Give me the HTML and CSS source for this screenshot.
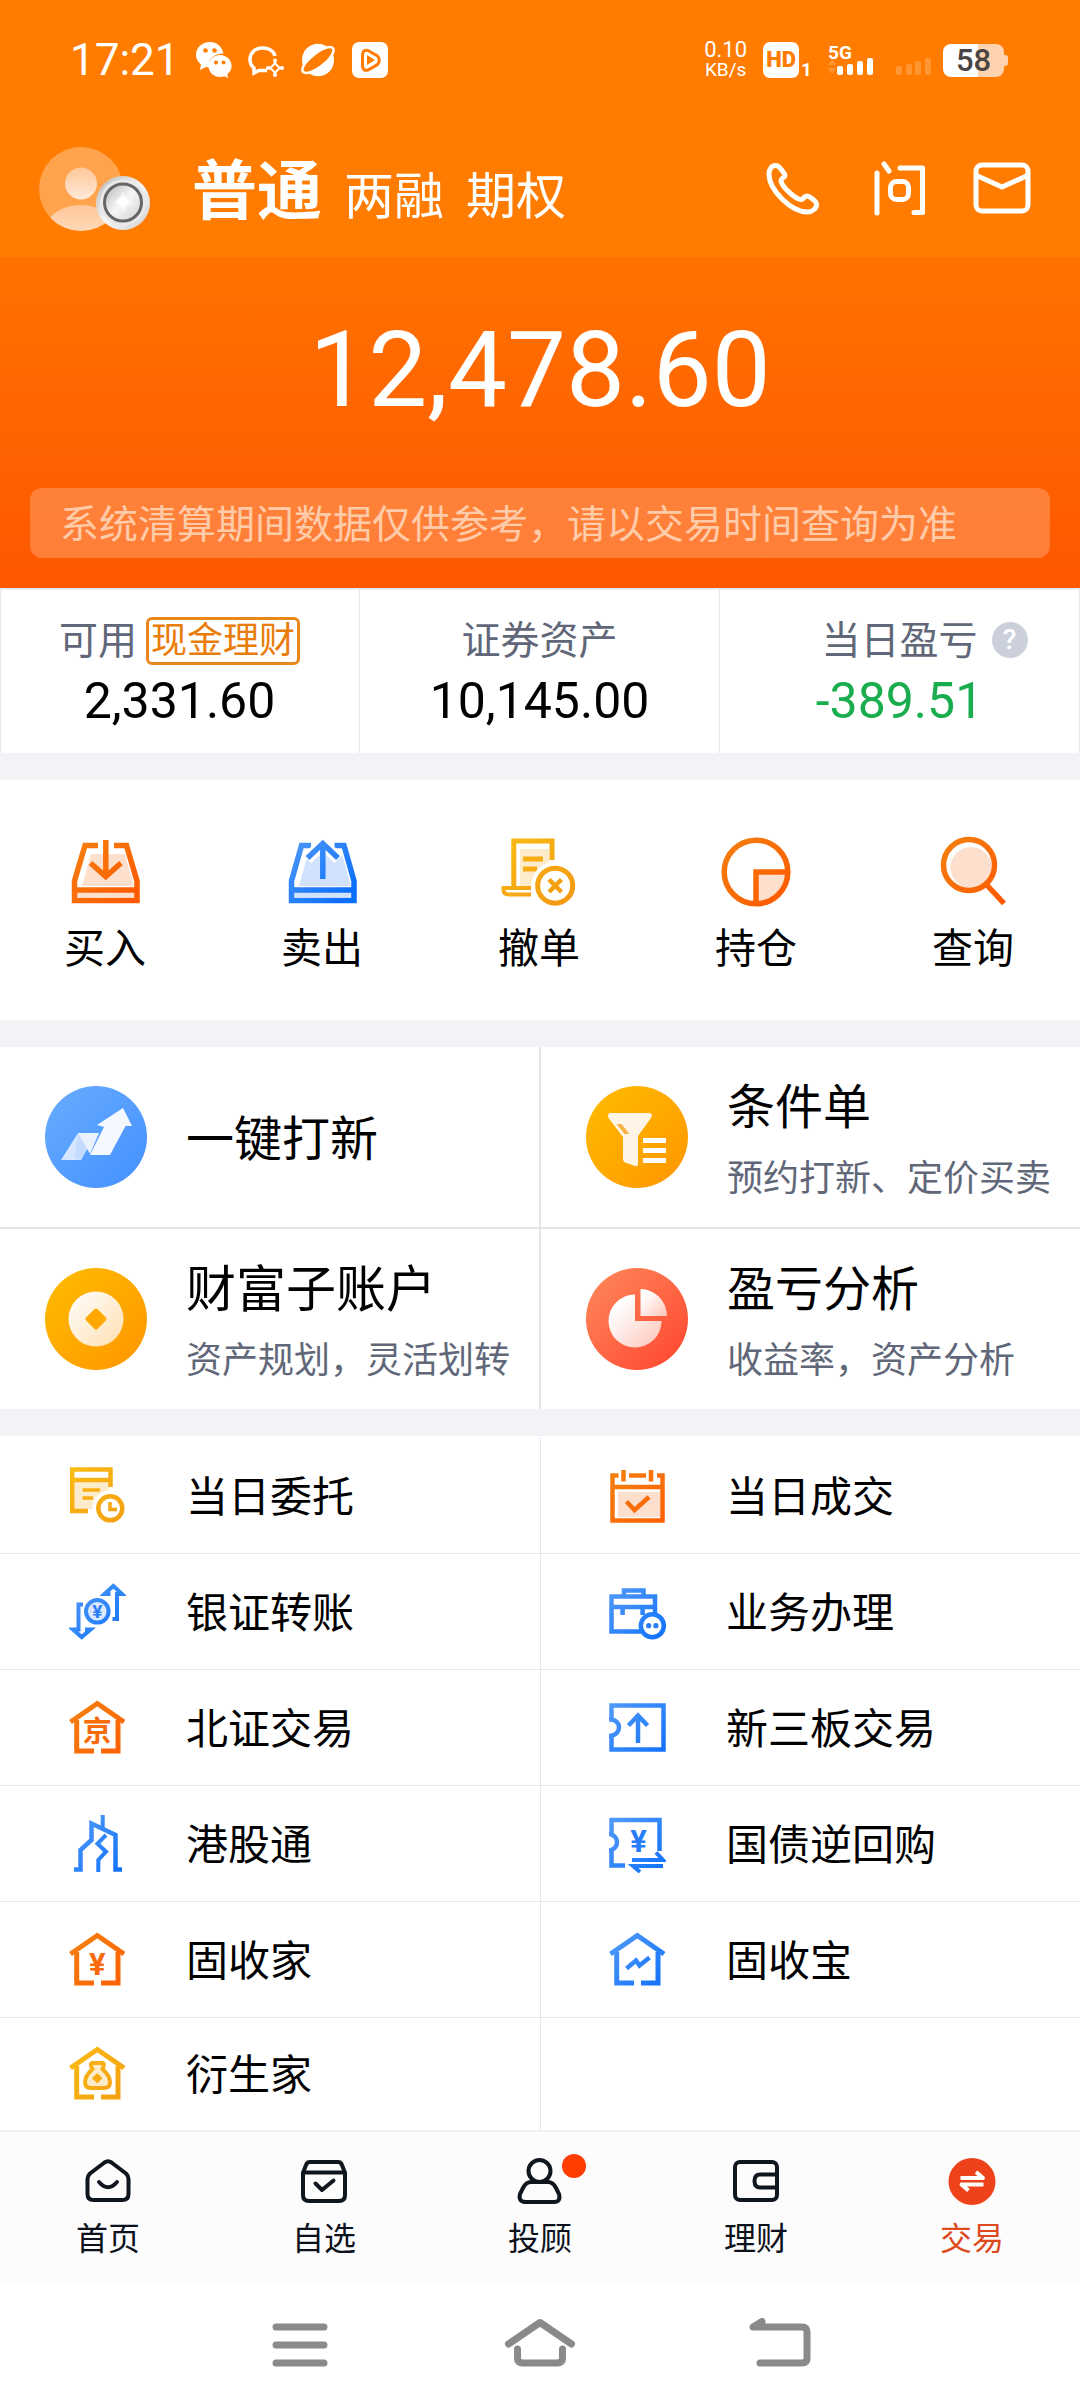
FILE: index.html
```html
<!DOCTYPE html>
<html lang="zh-CN">
<head>
<meta charset="utf-8">
<meta name="viewport" content="width=device-width, initial-scale=1">
<title>交易</title>
<link rel="stylesheet" href="styles.css">
</head>
<body>
<svg class="defs" aria-hidden="true">
  <defs>
    <linearGradient id="orange" gradientUnits="userSpaceOnUse" x1="0" y1="0" x2="64" y2="64"><stop offset="0" stop-color="#f4820f"/><stop offset="1" stop-color="#ff5a00"/></linearGradient>
    <linearGradient id="blue" gradientUnits="userSpaceOnUse" x1="0" y1="0" x2="60" y2="60"><stop offset="0" stop-color="#559cf8"/><stop offset="1" stop-color="#0a6efc"/></linearGradient>
    <linearGradient id="yellow" gradientUnits="userSpaceOnUse" x1="0" y1="0" x2="60" y2="60"><stop offset="0" stop-color="#fbbc14"/><stop offset="1" stop-color="#f39c12"/></linearGradient>
    <linearGradient id="disc-blue" x1="0" y1="0" x2="1" y2="1"><stop offset="0" stop-color="#69adff"/><stop offset="1" stop-color="#4390ff"/></linearGradient>
    <linearGradient id="disc-gold" x1="0" y1="0" x2="1" y2="1"><stop offset="0" stop-color="#ffbd00"/><stop offset="1" stop-color="#ff9500"/></linearGradient>
    <linearGradient id="disc-red" x1="0" y1="0" x2="1" y2="1"><stop offset="0" stop-color="#ff8a5c"/><stop offset="1" stop-color="#ff442e"/></linearGradient>
    <linearGradient id="cream" x1="0" y1="0" x2="1" y2="1"><stop offset="0" stop-color="#fff"/><stop offset="1" stop-color="#ffdfb0"/></linearGradient>
    <linearGradient id="blush" x1="0" y1="0" x2="1" y2="1"><stop offset=".2" stop-color="#fff"/><stop offset="1" stop-color="#ffc4b8"/></linearGradient>
    <linearGradient id="silver" x1="0" y1="0" x2="1" y2="1"><stop offset="0" stop-color="#b5b5b5"/><stop offset=".5" stop-color="#f6f6f6"/><stop offset="1" stop-color="#d0d0d0"/></linearGradient>
    <linearGradient id="person" x1="0" y1="0" x2="0" y2="1"><stop offset="0" stop-color="#ffc799"/><stop offset="1" stop-color="#ffe9d8"/></linearGradient>
    <clipPath id="avatar-clip"><circle cx="42" cy="42" r="42"/></clipPath>
    <g id="house" fill="none" stroke-width="5"><path d="M1.500 23L28.300 4.500L55 23"/><path d="M7.700 21V52H25M32 52H49V21"/></g>
  </defs>
</svg>

<header class="top">
  <div class="status">
    <time class="clock">17:21</time>
    <div class="notices">
      <svg width="36" height="36" viewBox="0 0 36 36"><path fill="#fff" d="M14 0C6 0 0 5.500 0 13c0 4 2 7 5 9.500L4 28l6-3c1 .4 2 .4 3 .4C12 17 18 11.500 27.500 11.500C26 4.500 21 0 14 0z"/><path fill="#fff" d="M24 13c-6.500 0-11.500 5-11.500 11S17.500 35 24 35c1.600 0 3-.3 4.400-.8L32 36l-.6-4c2.600-2 4.200-4.800 4.200-8C35.600 18 30.500 13 24 13z"/><g fill="#ff7c00"><circle cx="9.500" cy="8.500" r="2.300"/><circle cx="18.500" cy="8.500" r="2.300"/><circle cx="20" cy="20.500" r="2"/><circle cx="27.500" cy="20.500" r="2"/></g></svg>
      <svg width="36" height="36" viewBox="0 0 36 36" fill="none" stroke="#fff" stroke-width="3.500"><path d="M27 14C26 9 21 6 14.500 6C7 6 2 11 2 17.500c0 4 1.500 6.500 4 8.500v5l5-2.500h8"/><path stroke-width="2" d="M27 20q1.500 4.500 6 6q-4.500 1.500-6 6q-1.500-4.500-6-6q4.500-1.500 6-6z"/><g fill="#fff" stroke="none"><circle cx="27" cy="18.500" r="2"/><circle cx="34" cy="26" r="2"/><circle cx="27" cy="33" r="2"/><circle cx="20" cy="26" r="2"/></g></svg>
      <svg width="36" height="36" viewBox="0 0 36 36"><circle cx="18" cy="18" r="16" fill="#fff"/><ellipse cx="18" cy="18" rx="19" ry="7" transform="rotate(-38 18 18)" fill="#ff7c00" stroke="#fff" stroke-width="2.500"/><path fill="#fff" d="M4 10A16 16 0 0 1 26 4L5 22z"/><path fill="#fff" d="M32 26A16 16 0 0 1 10 32L31 15z"/></svg>
      <svg width="36" height="36" viewBox="0 0 36 36"><rect width="36" height="36" rx="7" fill="#fff"/><path d="M16 8.500L25.500 14q3.500 4 0 8.500L16 28q-5 1.500-5.500-4V12.500q.5-5.500 5.500-4z" fill="none" stroke="#ff7c00" stroke-width="3"/><path fill="#ff7c00" d="M15 13l8 5l-8 5z"/></svg>
    </div>
    <div class="signals">
      <div class="speed"><span class="speed-num">0.10</span><span class="speed-unit">KB/s</span></div>
      <div class="hd"><span class="hd-box">HD</span><span class="hd-sim">1</span></div>
      <svg width="46" height="44" viewBox="0 -4 46 44"><text class="svg-5g" x="0" y="17">5G</text><path fill="#fff" opacity=".2" d="M0 23h8l-4-6zM0 26h8l-4 6z"/><g fill="#fff"><rect x="9" y="24" width="6" height="9" rx="2"/><rect x="19" y="22" width="6" height="11" rx="2"/><rect x="29" y="19" width="6" height="14" rx="2"/><rect x="39" y="16" width="6" height="17" rx="2"/></g></svg>
      <svg class="sim2" width="36" height="36" viewBox="0 0 36 36"><g fill="#fff" opacity=".2"><rect y="24" width="6" height="9" rx="2"/><rect x="10" y="22" width="6" height="11" rx="2"/><rect x="19" y="19" width="6" height="14" rx="2"/><rect x="29" y="16" width="6" height="17" rx="2"/></g></svg>
      <div class="battery">58</div>
    </div>
  </div>

  <div class="account">
    <a class="avatar" href="#" aria-label="个人中心">
      <svg width="112" height="84" viewBox="0 0 112 84">
        <circle cx="42" cy="42" r="42" fill="#fff" fill-opacity=".3"/>
        <g clip-path="url(#avatar-clip)" fill="url(#person)"><circle cx="42" cy="36.500" r="16"/><ellipse cx="42" cy="84" rx="36" ry="26"/></g>
        <circle cx="84" cy="56" r="27" fill="url(#silver)"/><circle cx="84" cy="55.500" r="23" fill="#e9e9e9"/><circle cx="84" cy="55.500" r="18.500" fill="url(#silver)" stroke="#666" stroke-width="3"/><path fill="#f6f6f6" d="M84 45q3 7.500 10.500 10.500q-7.500 3-10.500 10.500q-3-7.500-10.500-10.500q7.500-3 10.500-10.500z"/><path fill="#fff" d="M84 49l6 6l-6 6l-6-6z"/>
      </svg>
    </a>
    <nav class="modes" aria-label="账户类型">
      <button class="mode mode-on" type="button">普通</button>
      <button class="mode" type="button">两融</button>
      <button class="mode" type="button">期权</button>
    </nav>
    <div class="tools">
      <button type="button" aria-label="电话"><svg width="56" height="56" viewBox="0 0 56 56" fill="none" stroke="#fff" stroke-width="5" stroke-linejoin="round"><path d="M4 13C4 8 7 4.500 10.500 4.500c2.500 0 3.500 1 5 3C18 11 20 12.500 20 14.500S16 17 16 19.500C16 25 30 38 36 38.500c2.500 0 3-3.500 5.500-3.500c2.500 0 9.500 4.500 10 8c.5 4-4 8-9 8C26 51 4 29 4 13z"/></svg></button>
      <button type="button" aria-label="咨询"><svg width="56" height="56" viewBox="-3 0 56 56" fill="none" stroke="#fff" stroke-width="5" stroke-linecap="round" stroke-linejoin="round"><path d="M5 12V52M12 3L17 10M28 7H50.500V51.500H42"/><rect x="18.500" y="20.500" width="18" height="18" rx="6"/></svg></button>
      <button type="button" aria-label="消息"><svg width="58" height="56" viewBox="0 0 58 56" fill="none" stroke="#fff" stroke-width="5" stroke-linejoin="round"><rect x="3" y="4" width="52" height="46" rx="6"/><path d="M3.500 14.500L29 26L54.500 14.500"/></svg></button>
    </div>
  </div>
</header>

<main>
  <section class="hero">
    <p class="total">12,478.60</p>
    <p class="tip">系统清算期间数据仅供参考，请以交易时间查询为准</p>
  </section>

  <section class="stats">
    <div class="stat"><div class="stat-label">可用<a class="tag" href="#">现金理财</a></div><div class="stat-value">2,331.60</div></div>
    <div class="stat"><div class="stat-label">证券资产</div><div class="stat-value">10,145.00</div></div>
    <div class="stat"><div class="stat-label"><span class="with-help">当日盈亏<button class="help" type="button" aria-label="说明">?</button></span></div><div class="stat-value down">-389.51</div></div>
  </section>

  <nav class="quick" aria-label="交易操作">
    <a href="#"><svg width="74" height="72" viewBox="-1 0 74 72" fill="none" stroke="url(#orange)" stroke-width="5.500"><path fill="#fddfcd" stroke="none" d="M22 18H56L65 50H13zM7 55H66V61H7z"/><path d="M29 9.500H16L5.500 45V64.500H68V45L57.500 9.500H45M5.500 54H68M36.800 4V39M21.500 27L36.800 40.500L52 27"/></svg>买入</a>
    <a href="#"><svg width="74" height="72" viewBox="-1 0 74 72" fill="none" stroke="url(#blue)" stroke-width="5.500"><path fill="#d0e2fd" stroke="none" d="M22 18H56L65 50H13zM7 55H66V61H7z"/><path d="M25 9.500H15.500L5.500 45V64.500H68V45L58 9.500H48.500M5.500 54H68"/><path stroke="#fff" stroke-width="12" d="M21 23L36.800 8L52.500 23"/><path d="M36.800 8V43M21.500 22L36.800 7.500L52 22"/></svg>卖出</a>
    <a href="#"><svg width="76" height="72" viewBox="0 0 76 72" fill="none" stroke="url(#yellow)" stroke-width="5"><path fill="#fdeccb" stroke="none" d="M19 13H48V50H19z"/><path d="M12.800 51V5H51V24M22 23H42M22 33H36"/><path stroke-width="4" d="M30 52H2.500V54Q2.500 58.500 8 58.500H30"/><circle cx="54.200" cy="49.700" r="24" fill="#fff" stroke="none"/><circle cx="54.200" cy="49.700" r="17.500"/><path stroke-width="4.500" d="M48 43.500L60.500 56M60.500 43.500L48 56"/></svg>撤单</a>
    <a href="#"><svg width="72" height="72" viewBox="0 0 72 72" fill="none" stroke="url(#orange)" stroke-width="5.500"><path fill="#fddfcd" stroke="none" d="M38 38H67A31 31 0 0 1 38 66z"/><circle cx="36" cy="36" r="31.800"/><path d="M36 67V36H67"/></svg>持仓</a>
    <a href="#"><svg width="72" height="72" viewBox="0 0 72 72" fill="none" stroke="url(#orange)" stroke-width="5.500"><circle cx="34" cy="31.500" r="20.500" fill="#fddfcd" stroke="none"/><circle cx="32" cy="29" r="25.500"/><path d="M49 48L67 67.500"/></svg>查询</a>
  </nav>

  <nav class="features" aria-label="特色功能">
    <a class="feature" href="#">
      <svg width="102" height="102" viewBox="0 0 102 102"><circle cx="51" cy="51" r="51" fill="url(#disc-blue)"/><path fill="#d5e5ff" d="M16 74L33 47L43 61L36 74z"/><path fill="#b9d4fd" d="M33 47L43 62L36 74L30 72z" opacity=".6"/><path fill="#eaf2ff" d="M33 47H54L45 68z"/><path fill="#f5f9ff" d="M78 22L87 40H80.500L65 69H45L59 41L52 39z"/></svg>
      <span class="feature-text"><span class="feature-name">一键打新</span></span>
    </a>
    <a class="feature" href="#">
      <svg width="102" height="102" viewBox="0 0 102 102"><circle cx="51" cy="51" r="51" fill="url(#disc-gold)"/><path fill="#fff5e6" d="M24 27H64Q67 28 65 32L52 50V78Q52 81 49 80L39 76.500Q37 76 37 73V51L22.500 32Q21 28 24 27z"/><path fill="#f9b24a" d="M30.500 38H35.600L43.500 48H38.400z"/><path fill="#fff" d="M57 52H80V57H57zM57 62H80V67H57zM57 72H80V77H57z"/></svg>
      <span class="feature-text"><span class="feature-name">条件单</span><span class="feature-note">预约打新、定价买卖</span></span>
    </a>
    <a class="feature" href="#">
      <svg width="102" height="102" viewBox="0 0 102 102"><circle cx="51" cy="51" r="51" fill="url(#disc-gold)"/><circle cx="51" cy="51" r="27.500" fill="url(#cream)"/><rect x="43" y="43" width="16" height="16" rx="2" transform="rotate(45 51 51)" fill="#ffa800"/></svg>
      <span class="feature-text"><span class="feature-name feature-main">财富子账户</span><span class="feature-note">资产规划，灵活划转</span></span>
    </a>
    <a class="feature" href="#">
      <svg width="102" height="102" viewBox="0 0 102 102"><circle cx="51" cy="51" r="51" fill="url(#disc-red)"/><path fill="url(#blush)" d="M49 53V26.500A26.500 26.500 0 1 0 75.500 53z"/><path fill="url(#blush)" d="M54.500 48V21A27 27 0 0 1 81 48z"/></svg>
      <span class="feature-text"><span class="feature-name">盈亏分析</span><span class="feature-note">收益率，资产分析</span></span>
    </a>
  </nav>

  <nav class="services" aria-label="全部业务">
    <a href="#"><svg width="57" height="58" viewBox="0 0 57 58" fill="none" stroke="url(#yellow)" stroke-width="4.500"><path fill="#fdeccb" stroke="none" d="M5 15H40V42H5z"/><path d="M41.500 20V2.500H3.200V44H19M3 13H41"/><path stroke-width="3.500" d="M13.500 23H31M13.500 31H24"/><circle cx="41.300" cy="41.300" r="18" fill="#fff" stroke="none"/><circle cx="41.300" cy="41.300" r="12"/><path stroke-width="3.500" d="M41 35V42.500H48"/></svg>当日委托</a>
    <a href="#"><svg width="57" height="58" viewBox="0 0 57 58" fill="none" stroke="url(#orange)" stroke-width="4.500"><path fill="#fddfcd" stroke="none" d="M9 25H51V50H9z"/><path d="M9.500 8.500H3.500V53.500H53.500V8.500H48M3.500 20H53.500M14.500 3V14.500M42 3V14.500M20 8.500H37M17.500 34.500L25.500 43L40 30"/></svg>当日成交</a>
    <a href="#"><svg width="57" height="58" viewBox="0 0 57 58" fill="none" stroke="url(#blue)" stroke-width="4"><path d="M14 21.500H9.500V46.500H4L12.700 54L21.500 46.500H16M43.500 36H48V11H53L44.300 3L35.500 11H41.500"/><circle cx="28.300" cy="28.300" r="11.300" fill="#dbe8fd"/><text class="yen-sm" x="28.300" y="35">¥</text></svg>银证转账</a>
    <a href="#"><svg width="57" height="58" viewBox="0 0 57 58" fill="none" stroke="url(#blue)" stroke-width="4.500"><path d="M15 12V7.500H34.500V12M2.500 13.500H46V48.500H2.500zM2.500 24H46M13.600 24V32M33.600 24V32"/><circle cx="43.300" cy="42.700" r="11.500" fill="#fff"/><g fill="#2a7dfa" stroke="none"><circle cx="39.700" cy="42.700" r="2.600"/><circle cx="46.900" cy="42.700" r="2.600"/></g></svg>业务办理</a>
    <a href="#"><svg width="57" height="58" viewBox="0 0 57 58" stroke="url(#orange)"><use href="#house"/><text class="glyph-jing" x="28.300" y="43">京</text></svg>北证交易</a>
    <a href="#"><svg width="57" height="58" viewBox="0 0 57 58" fill="none" stroke="url(#blue)" stroke-width="4.500"><path d="M0 20.500H2.500V6.500H54.500V50.500H2.500V37H0M2 20.500A8 8 0 0 1 2 36.500M29 16V44M19.500 26.500L29 16.500L38.500 26.500"/></svg>新三板交易</a>
    <a href="#"><svg width="57" height="58" viewBox="0 0 57 58" fill="none" stroke="url(#blue)" stroke-width="4.500"><path d="M5 54.500H11.500V35L22.500 25V8.500L46.500 20V54.500H53"/><path stroke-width="4" d="M33.700 0V13M37 20L28.500 28.700L37 36.700L29.300 45V57"/></svg>港股通</a>
    <a href="#"><svg width="57" height="58" viewBox="0 0 57 58" fill="none" stroke="url(#blue)" stroke-width="4.500"><path d="M0 19H2.500V5H50.500V36M0 35.500H2.500V50.500H16M2 19.500A8 8 0 0 1 2 35"/><path stroke-width="4" d="M23 45H54L47 37.500M54 51H24L31 57"/><text class="yen" x="29.500" y="37">¥</text></svg>国债逆回购</a>
    <a href="#"><svg width="57" height="58" viewBox="0 0 57 58" stroke="url(#orange)"><use href="#house"/><text class="yen yen-orange" x="28.300" y="44">¥</text></svg>固收家</a>
    <a href="#"><svg width="57" height="58" viewBox="0 0 57 58" stroke="url(#blue)"><use href="#house"/><path fill="none" stroke-width="4.500" d="M17.500 37.500L27 29.500L30.500 34.500L40.500 26.500"/></svg>固收宝</a>
    <a href="#"><svg width="57" height="58" viewBox="0 0 57 58" stroke="url(#yellow)"><use href="#house"/><path fill="#fdeccb" stroke-width="4" d="M23 18H34Q36 19 33.500 24Q41 31 41 37Q41 43 35 43H22Q16 43 16 37Q16 31 23.500 24Q20.500 19 23 18z"/><path fill="#f8ac13" stroke="none" d="M28.300 28L33.500 33.200L28.300 38.400L23 33.200z"/></svg>衍生家</a>
    <span class="blank"></span>
  </nav>
</main>

<footer class="bottom">
  <nav class="tabs" aria-label="主导航">
    <a href="#"><svg width="48" height="48" viewBox="0 0 48 48"><path d="M20.500 4.500Q24 2 27.500 4.500L42 15.500Q44.500 18 44.500 21V36Q44.500 42 38.500 42H9.500Q3.500 42 3.500 36V21Q3.500 18 6 15.500z"/><path d="M15 24Q24 34.500 33 24"/></svg>首页</a>
    <a href="#"><svg width="48" height="48" viewBox="0 0 48 48"><path d="M10 4H38Q41 4 42 7L45 15V37Q45 43 39 43H9Q3 43 3 37V15L6 7Q7 4 10 4zM3 14.500H45"/><path d="M15.500 25.500L22 32L33.500 22.500"/></svg>自选</a>
    <a href="#"><span class="dotted"><svg width="48" height="48" viewBox="0 0 48 48"><circle cx="23.500" cy="13" r="11"/><path d="M15 24H32Q37 24 40 30L43 36Q45 44 38 44H10Q2 44 4 36L7 30Q10 24 15 24z"/></svg><i class="dot"></i></span>投顾</a>
    <a href="#"><svg width="48" height="48" viewBox="0 0 48 48"><rect x="3" y="4" width="42" height="38" rx="5"/><path d="M45 16.500H28Q22.500 16.500 22.500 23T28 29.500H45"/></svg>理财</a>
    <a class="tab-on" href="#"><svg width="48" height="48" viewBox="0 0 48 48"><circle cx="24" cy="23.500" r="23.500" fill="#ee421b" stroke="none"/><g fill="none" stroke="#fff" stroke-width="4" stroke-linecap="butt"><path d="M12.500 20H35L28 14M35.500 26.500H13.500L20.500 32.500"/></g></svg>交易</a>
  </nav>
  <nav class="system" aria-label="系统导航">
    <button type="button" aria-label="最近任务"><svg width="72" height="56" viewBox="0 0 72 56"><path d="M12 9H60M12 27H60M12 45H60"/></svg></button>
    <button type="button" aria-label="主屏幕"><svg width="72" height="56" viewBox="0 0 72 56"><path d="M4.500 26L36 4.500L67.500 26M13.500 31V40Q13.500 45 19 45H53Q58.500 45 58.500 40V31"/></svg></button>
    <button type="button" aria-label="返回"><svg width="72" height="56" viewBox="0 0 72 56"><path d="M16 45H58Q63 45 63 40V14Q63 9 58 9H9L18 3.500"/></svg></button>
  </nav>
</footer>
</body>
</html>
```
FILE: styles.css
```css
* {
  box-sizing: border-box;
}

body {
  margin: 0;
  background: #fff;
  color: #000;
  font-family: Roboto, "Noto Sans CJK SC", sans-serif;
}

a {
  color: inherit;
  text-decoration: none;
}

button {
  margin: 0;
  padding: 0;
  border: 0;
  background: none;
  color: inherit;
  font: inherit;
}

p {
  margin: 0;
}

svg {
  display: block;
  flex: none;
}

.defs {
  position: absolute;
  width: 0;
  height: 0;
}

/* Header */
.top {
  background: #ff7c00;
  color: #fff;
}

.status {
  display: flex;
  align-items: center;
  height: 120px;
  padding: 0 76px 0 70px;
}

.clock {
  font-size: 44px;
  line-height: 56px;
}

.notices {
  display: flex;
  gap: 16px;
  margin-left: 16px;
}

.signals {
  display: flex;
  align-items: center;
  gap: 16px;
  margin-left: auto;
}

.speed {
  display: flex;
  flex-direction: column;
  align-items: center;
  line-height: 20px;
}

.speed-num {
  font-size: 22px;
}

.speed-unit {
  font-size: 19px;
}

.hd {
  display: flex;
  align-items: flex-end;
  gap: 2px;
}

.hd-box {
  width: 36px;
  border-radius: 7px;
  background: #fff;
  color: #ff7c00;
  font-size: 22px;
  font-weight: 900;
  line-height: 36px;
  text-align: center;
}

.hd-sim {
  font-size: 19px;
  font-weight: 700;
  line-height: 16px;
}

.svg-5g {
  fill: #fff;
  font-size: 19px;
  font-weight: 700;
}

.sim2 {
  margin-left: 6px;
}

.battery {
  position: relative;
  width: 61px;
  margin-left: -5px;
  border-radius: 8px;
  background: linear-gradient(90deg, #fff 58%, #ffd3ad 58%);
  color: #4a4542;
  font-size: 31px;
  font-weight: 500;
  line-height: 33px;
  text-align: center;
}

.battery::after {
  content: "";
  position: absolute;
  top: 11px;
  right: -4px;
  width: 4px;
  height: 11px;
  border-radius: 0 3px 3px 0;
  background: #ffd3ad;
}

.account {
  display: flex;
  align-items: center;
  height: 137px;
  padding: 0 49px 0 39px;
}

.modes {
  display: flex;
  align-items: baseline;
  gap: 22px;
  margin-left: 41px;
  padding-top: 12px;
}

.mode {
  font-size: 50px;
  line-height: 80px;
}

.mode-on {
  font-size: 65px;
  font-weight: 700;
}

.tools {
  display: flex;
  gap: 48px;
  margin-left: auto;
}

/* Total assets */
.hero {
  padding: 54px 30px 30px;
  background: linear-gradient(#ff7200, #ff5700);
  color: #fff;
}

.total {
  font-size: 105px;
  line-height: 120px;
  text-align: center;
}

.tip {
  margin-top: 57px;
  padding: 4px 30px 0;
  border-radius: 12px;
  background: rgba(255, 255, 255, 0.22);
  color: #ffcba9;
  font-size: 39px;
  line-height: 66px;
  white-space: nowrap;
}

.stats {
  display: grid;
  grid-template-columns: repeat(3, 1fr);
  border-top: 2px solid #e9eaec;
  background: linear-gradient(90deg, #e4e6ea 1px, transparent 1px);
}

.stat {
  padding: 27px 0;
  border-right: 1px solid #e4e6ea;
  text-align: center;
}

.stat-label {
  display: flex;
  align-items: center;
  justify-content: center;
  gap: 9px;
  color: #5f6778;
  font-size: 39px;
  line-height: 48px;
}

.tag {
  padding: 0 2px;
  border: 3px solid #ea871c;
  border-radius: 6px;
  color: #ea7c0a;
  font-size: 36px;
  line-height: 42px;
}

.with-help {
  position: relative;
}

.help {
  position: absolute;
  top: 5px;
  left: 100%;
  width: 36px;
  height: 36px;
  margin-left: 14px;
  border-radius: 50%;
  background: #cbd0db;
  color: #fff;
  font-size: 28px;
  font-weight: 500;
  line-height: 36px;
}

.stat-value {
  margin-top: 11px;
  font-size: 50px;
  line-height: 50px;
}

.down {
  color: #1aad4e;
}

/* Trade actions */
.quick {
  display: flex;
  justify-content: space-between;
  padding: 56px 66px 46px 64px;
  border-top: 27px solid #f2f3f7;
}

.quick a {
  display: flex;
  flex-direction: column;
  align-items: center;
  width: 82px;
  gap: 16px;
  font-size: 41px;
  line-height: 50px;
}

/* Feature cards */
.features {
  display: grid;
  grid-template-columns: 1fr 1fr;
  gap: 2px;
  border-top: 27px solid #f2f3f7;
  border-bottom: 27px solid #f2f3f7;
  background: #e4e6ea;
}

.feature {
  display: flex;
  align-items: center;
  gap: 39px;
  min-height: 180px;
  padding-left: 45px;
  background: #fff;
}

.feature-text {
  display: flex;
  flex-direction: column;
  gap: 12px;
  padding-top: 5px;
  white-space: nowrap;
}

.feature-name {
  font-size: 48px;
  line-height: 66px;
}

.feature-main {
  font-size: 50px;
}

.feature-note {
  color: #5f6778;
  font-size: 36px;
  line-height: 52px;
}

/* Service list */
.services {
  display: grid;
  grid-template-columns: 1fr 1fr;
  padding-top: 2px;
}

.services > * {
  display: flex;
  align-items: center;
  gap: 60px;
  min-height: 116px;
  padding: 4px 0 0 69px;
  border-bottom: 1px solid #e4e6ea;
  font-size: 42px;
  line-height: 56px;
}

.services svg {
  margin-bottom: 4px;
}

.services > :nth-child(even) {
  padding-left: 68px;
  border-left: 1px solid #e4e6ea;
}

.services > :nth-last-child(-n + 2) {
  min-height: 112px;
  border-bottom: 0;
}

.yen,
.yen-sm,
.glyph-jing {
  stroke: none;
  text-anchor: middle;
  font-weight: 700;
}

.yen {
  fill: #2a7dfa;
  font-size: 31px;
}

.yen-orange {
  fill: #f96a0a;
}

.yen-sm {
  fill: #2a7dfa;
  font-size: 19px;
}

.glyph-jing {
  fill: #f96a0a;
  font-size: 29px;
}

/* Bottom bars */
.tabs {
  display: grid;
  grid-template-columns: repeat(5, 1fr);
  padding: 26px 0 21px;
  border-top: 2px solid #f2f2f3;
  background: #fcfcfd;
}

.tabs a {
  display: flex;
  flex-direction: column;
  align-items: center;
  gap: 12px;
  color: #0c121c;
  font-size: 32px;
  line-height: 43px;
}

.tabs svg {
  fill: none;
  stroke: #10161d;
  stroke-width: 4px;
  stroke-linecap: round;
  stroke-linejoin: round;
}

.tabs .tab-on {
  color: #dd4a20;
}

.dotted {
  position: relative;
}

.dot {
  position: absolute;
  top: -4px;
  right: -22px;
  width: 24px;
  height: 24px;
  border-radius: 50%;
  background: #ff3d00;
}

.system {
  display: flex;
  justify-content: center;
  gap: 168px;
  padding: 36px 0 34px;
}

.system svg {
  fill: none;
  stroke: #8a8a8a;
  stroke-width: 7px;
  stroke-linecap: round;
  stroke-linejoin: round;
}
```
